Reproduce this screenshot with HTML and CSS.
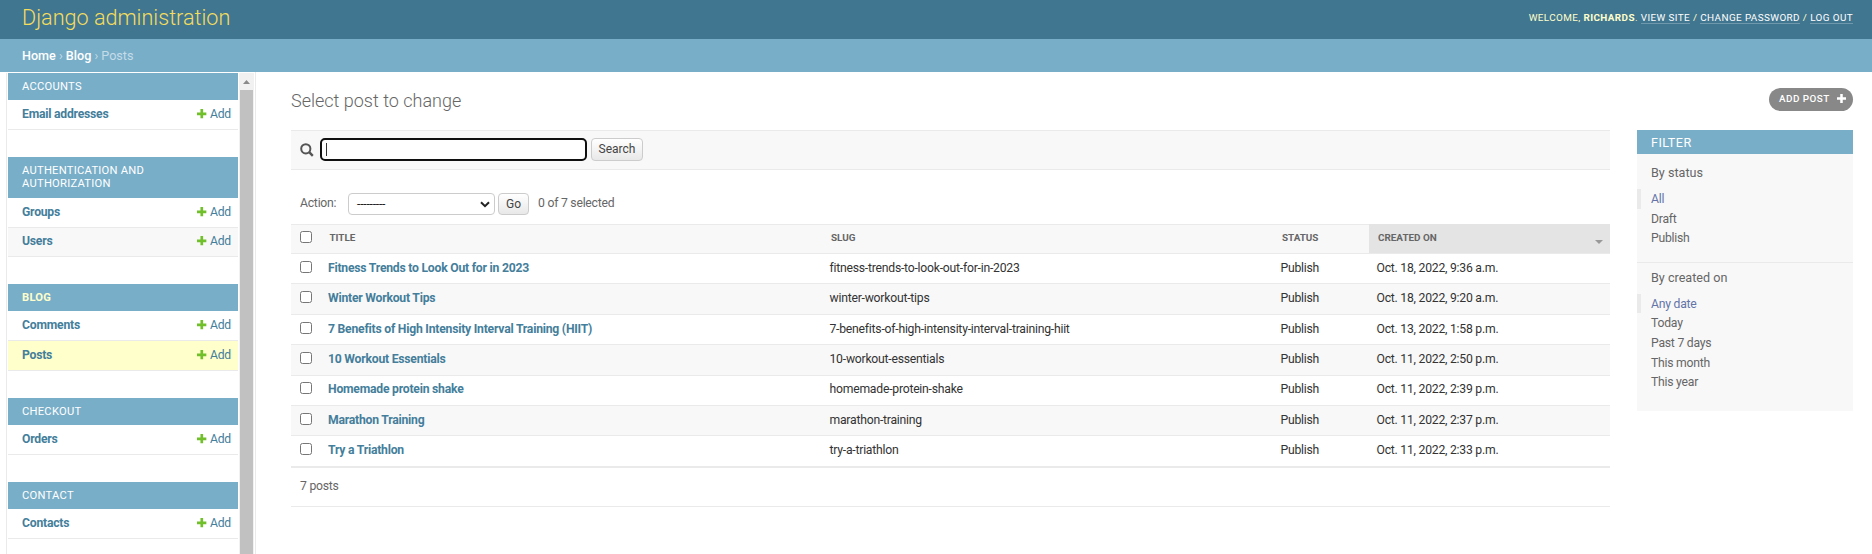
FILE: index.html
```html
<!DOCTYPE html>
<html lang="en">
<head>
<meta charset="utf-8">
<title>Select post to change | Django site admin</title>
<link rel="stylesheet" href="styles.css">
</head>
<body>
<svg class="defs" width="0" height="0">
  <symbol id="plus" viewBox="0 0 10 10"><path d="M3.6 0h2.8v3.6H10v2.8H6.4V10H3.6V6.4H0V3.6h3.6z"/></symbol>
</svg>
<header class="header">
  <h1 class="brand">Django administration</h1>
  <div class="user-tools">Welcome, <strong>Richards</strong>. <a>View site</a> / <a>Change password</a> / <a>Log out</a></div>
</header>
<nav class="breadcrumbs"><a>Home</a> › <a>Blog</a> › Posts</nav>
<div class="main">
  <aside class="sidebar">
    <div class="modules">
      <section class="module">
        <h2 class="caption">Accounts</h2>
        <div class="model"><b>Email addresses</b><a class="add"><svg><use href="#plus"/></svg>Add</a></div>
      </section>
      <section class="module auth">
        <h2 class="caption">Authentication and Authorization</h2>
        <div class="model"><b>Groups</b><a class="add"><svg><use href="#plus"/></svg>Add</a></div>
        <div class="model even"><b>Users</b><a class="add"><svg><use href="#plus"/></svg>Add</a></div>
      </section>
      <section class="module">
        <h2 class="caption current-app">Blog</h2>
        <div class="model"><b>Comments</b><a class="add"><svg><use href="#plus"/></svg>Add</a></div>
        <div class="model current"><b>Posts</b><a class="add"><svg><use href="#plus"/></svg>Add</a></div>
      </section>
      <section class="module">
        <h2 class="caption">Checkout</h2>
        <div class="model"><b>Orders</b><a class="add"><svg><use href="#plus"/></svg>Add</a></div>
      </section>
      <section class="module">
        <h2 class="caption">Contact</h2>
        <div class="model"><b>Contacts</b><a class="add"><svg><use href="#plus"/></svg>Add</a></div>
      </section>
    </div>
    <div class="scrollbar">
      <svg class="arrow" viewBox="0 0 7 4"><path d="M0 4 3.5 0 7 4z"/></svg>
      <div class="thumb"></div>
    </div>
  </aside>
  <main class="content">
    <div class="title-row">
      <h2 class="title">Select post to change</h2>
      <a class="add-post">Add post<svg><use href="#plus"/></svg></a>
    </div>
    <div class="columns">
      <div class="changelist">
        <form class="search">
          <svg class="glass" viewBox="0 0 14 14"><circle cx="5.8" cy="5.8" r="4.6"/><path d="m9.2 9.2 3.6 3.6"/></svg>
          <div class="field"><i class="caret"></i></div>
          <button type="button" class="button">Search</button>
        </form>
        <div class="actions">
          <span class="label">Action:</span>
          <div class="select">---------<svg viewBox="0 0 10 7"><path d="m1 1.2 4 4 4-4"/></svg></div>
          <button type="button" class="button go">Go</button>
          <span class="counter">0 of 7 selected</span>
        </div>
        <div class="table">
          <div class="row head"><i class="box"></i><span>Title</span><span>Slug</span><span>Status</span><span class="sorted">Created on<svg viewBox="0 0 8 4"><path d="M0 0h8L4 4z"/></svg></span></div>
          <div class="row"><i class="box"></i><b>Fitness Trends to Look Out for in 2023</b><span>fitness-trends-to-look-out-for-in-2023</span><span>Publish</span><span>Oct. 18, 2022, 9:36 a.m.</span></div>
          <div class="row even"><i class="box"></i><b>Winter Workout Tips</b><span>winter-workout-tips</span><span>Publish</span><span>Oct. 18, 2022, 9:20 a.m.</span></div>
          <div class="row"><i class="box"></i><b>7 Benefits of High Intensity Interval Training (HIIT)</b><span>7-benefits-of-high-intensity-interval-training-hiit</span><span>Publish</span><span>Oct. 13, 2022, 1:58 p.m.</span></div>
          <div class="row even"><i class="box"></i><b>10 Workout Essentials</b><span>10-workout-essentials</span><span>Publish</span><span>Oct. 11, 2022, 2:50 p.m.</span></div>
          <div class="row"><i class="box"></i><b>Homemade protein shake</b><span>homemade-protein-shake</span><span>Publish</span><span>Oct. 11, 2022, 2:39 p.m.</span></div>
          <div class="row even"><i class="box"></i><b>Marathon Training</b><span>marathon-training</span><span>Publish</span><span>Oct. 11, 2022, 2:37 p.m.</span></div>
          <div class="row"><i class="box"></i><b>Try a Triathlon</b><span>try-a-triathlon</span><span>Publish</span><span>Oct. 11, 2022, 2:33 p.m.</span></div>
        </div>
        <div class="paginator">7 posts</div>
      </div>
      <aside class="filter">
        <h2 class="filter-title">Filter</h2>
        <h3 class="filter-name">By status</h3>
        <ul class="choices">
          <li class="selected">All</li><li>Draft</li><li>Publish</li>
        </ul>
        <h3 class="filter-name second">By created on</h3>
        <ul class="choices">
          <li class="selected">Any date</li><li>Today</li><li>Past 7 days</li><li>This month</li><li>This year</li>
        </ul>
      </aside>
    </div>
  </main>
</div>
</body>
</html>
```
FILE: styles.css
```css
* { box-sizing: border-box; }
html, body { height: 100%; }
body {
  margin: 0;
  height: 554px;
  overflow: hidden;
  display: flex;
  flex-direction: column;
  background: #fff;
  color: #333;
  font: 12.2px/14px Roboto, "Liberation Sans", sans-serif;
  letter-spacing: -.23px;
}
h1, h2, h3, ul { margin: 0; padding: 0; font-weight: 400; list-style: none; }
svg { display: block; flex: none; }
.defs { position: absolute; }

.header {
  flex: none;
  height: 39px;
  padding: 0 19px 4px 22px;
  display: flex;
  align-items: center;
  justify-content: space-between;
  background: #417690;
  color: #ffc;
}
.brand { font-size: 21.6px; line-height: 26px; font-weight: 300; letter-spacing: 0; color: #f5dd5d; }
.user-tools { font-size: 9.9px; letter-spacing: .4px; text-transform: uppercase; }
.user-tools a { color: #fff; border-bottom: 1px solid rgba(255, 255, 255, .25); }
.breadcrumbs {
  flex: none;
  height: 33px;
  padding: 0 22px;
  font-size: 12.6px;
  line-height: 33px;
  letter-spacing: 0;
  background: #79aec8;
  color: #c4dce8;
}
.breadcrumbs a { color: #fff; font-weight: 500; }

.main { flex: 1; min-height: 0; display: flex; }
.sidebar {
  width: 256px;
  flex: none;
  padding: 1px 0 0 1px;
  display: flex;
  border-right: 1px solid #eaeaea;
  overflow: hidden;
}
.modules {
  width: 233px;
  margin-left: 5px;
  padding-left: 1px;
  border-left: 1px solid #eaeaea;
  display: flex;
  flex-direction: column;
  gap: 27px;
}
.module { width: 230px; }
.caption {
  padding: 7px 14px 6px;
  min-height: 27px;
  background: #79aec8;
  color: #fff;
  font-size: 11.2px;
  line-height: 13px;
  letter-spacing: .25px;
  font-weight: 400;
  text-transform: uppercase;
}
.auth .caption { height: 41px; }
.caption.current-app { color: #ffc; font-weight: 700; }
.model {
  height: 30px;
  padding: 0 7px 1px 14px;
  display: flex;
  align-items: center;
  justify-content: space-between;
  border-bottom: 1px solid #eaeaea;
  color: #447e9b;
}
.auth .model { height: 29.5px; }
.even { background: #f8f8f8; }
.current { background: #ffc; }
.model b, .row b { font-weight: 700; color: #447e9b; }
.add { display: flex; align-items: center; gap: 3.4px; }
.add svg { width: 9.6px; height: 9.6px; fill: #70bf2b; }
.scrollbar { width: 15px; background: #f1f1f1; display: flex; flex-direction: column; align-items: center; }
.arrow { width: 7px; height: 4px; margin: 7px 0 6px; fill: #8a8a8a; }
.thumb { width: 13px; flex: 1; background: #c1c1c1; }

.content { flex: 1; min-width: 0; padding: 16px 19px 0 35px; }
.title-row { height: 42px; display: flex; justify-content: space-between; align-items: flex-start; }
.title { padding-top: 1px; font-size: 18px; line-height: 24px; font-weight: 300; letter-spacing: 0; color: #666; }
.add-post {
  width: 84px;
  height: 23px;
  padding: 0 7px 2px 10px;
  border-radius: 12px;
  display: flex;
  align-items: center;
  justify-content: space-between;
  background: #888;
  color: #fff;
  font-size: 9.9px;
  font-weight: 500;
  letter-spacing: .45px;
  text-transform: uppercase;
}
.add-post svg { width: 9px; height: 9px; fill: #fff; }
.columns { display: flex; align-items: flex-start; gap: 27px; }
.changelist { flex: 1; min-width: 0; }
.search {
  height: 40px;
  padding: 0 9px 1px;
  display: flex;
  align-items: center;
  border: solid #eaeaea;
  border-width: 1px 0;
  background: #f8f8f8;
}
.glass { width: 14px; height: 14px; margin-right: 6px; fill: none; stroke: #555; stroke-width: 2; }
.glass path { stroke-width: 2.4; }
.field {
  width: 267px;
  height: 23px;
  margin-right: 4px;
  padding: 3px 4px;
  border: 2px solid #101010;
  border-radius: 5px;
  background: #fff;
}
.caret { display: block; width: 1px; height: 13px; background: #333; }
.button {
  width: 52px;
  height: 23px;
  padding: 0 0 1px;
  border: 1px solid #ccc;
  border-radius: 4px;
  background: linear-gradient(#fff, #e8e8e8);
  color: #444;
  font: 12px/14px Roboto, sans-serif;
}
.actions { height: 54px; padding: 14px 9px 0; display: flex; align-items: center; color: #666; }
.label { width: 48px; padding-bottom: 2px; }
.counter { padding-bottom: 2px; }
.select {
  width: 147px;
  height: 22px;
  margin-right: 3px;
  padding: 0 4px 0 8px;
  display: flex;
  align-items: center;
  justify-content: space-between;
  border: 1px solid #ccc;
  border-radius: 4px;
  color: #222;
}
.select svg { width: 10px; height: 7px; fill: none; stroke: #222; stroke-width: 2; }
.go { width: 31px; height: 22px; margin-right: 9px; }

.table { border-top: 1px solid #eaeaea; border-bottom: 1px solid #eaeaea; }
.row {
  height: 30.4px;
  padding-bottom: 1.6px;
  display: grid;
  grid-template-columns: 37px 501.5px 451px 96px 1fr;
  align-items: center;
  border-bottom: 1px solid #eaeaea;
}
.head { height: 29px; background: #f8f8f8; color: #666; font-size: 9.9px; font-weight: 700; letter-spacing: 0; text-transform: uppercase; }
.head span { padding-left: 1.5px; }
.head .sorted {
  align-self: start;
  height: 29px;
  margin: -1px 0 -2px -8px;
  padding: 0 7px 1px 9.5px;
  display: flex;
  align-items: center;
  justify-content: space-between;
  background: #e4e4e4;
}
.sorted svg { width: 8px; height: 4px; margin-top: 7px; fill: #999; }
.box { width: 12px; height: 12px; margin: 0 0 2px 9px; border: 1px solid #767676; border-radius: 2.5px; background: #fff; }
.paginator { height: 39px; padding: 0 9px; line-height: 37px; color: #666; border-bottom: 1px solid #eaeaea; }

.filter { width: 216px; height: 281px; background: #f8f8f8; color: #666; }
.filter-title {
  height: 24px;
  padding-left: 14px;
  background: #79aec8;
  color: #fff;
  font-size: 12.6px;
  line-height: 25px;
  font-weight: 400;
  letter-spacing: .45px;
  text-transform: uppercase;
}
.filter-name { height: 35px; padding: 11px 14px 0; font-size: 12.6px; line-height: 16px; letter-spacing: 0; }
.second { padding-top: 7px; height: 32px; }
.choices li { height: 19.6px; padding-left: 10px; line-height: 20px; border-left: 4px solid transparent; }
.choices .selected { color: #6375a8; border-left-color: #eaeaea; }
.choices + .second { margin-top: 14px; border-top: 1px solid #eaeaea; }
```
